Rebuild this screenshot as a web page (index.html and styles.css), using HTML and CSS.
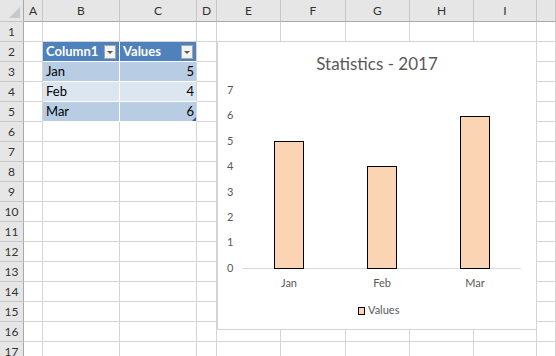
FILE: index.html
```html
<!DOCTYPE html>
<html lang="en">
<head>
    <meta charset="UTF-8">
    <title>Statistics - 2017</title>
    <link rel="stylesheet" href="styles.css">
</head>
<body>
    <div class="sheet">
        <table class="grid">
            <colgroup>
                <col class="c-row">
                <col style="width:19px">
                <col style="width:77px">
                <col style="width:77px">
                <col style="width:20px">
                <col style="width:64px">
                <col style="width:65px">
                <col style="width:64px">
                <col style="width:64px">
                <col style="width:63px">
                <col style="width:19px">
            </colgroup>
            <tr class="head">
                <th class="corner"><span class="tri"></span></th>
                <th>A</th><th>B</th><th>C</th><th>D</th><th>E</th><th>F</th><th>G</th><th>H</th><th>I</th><th></th>
            </tr>
            <tr><th>1</th><td></td><td></td><td></td><td></td><td></td><td></td><td></td><td></td><td></td><td></td></tr>
            <tr><th>2</th><td></td>
                <td class="t-head"><span class="hcell">Column1<span class="drop"></span></span></td>
                <td class="t-head t-last"><span class="hcell">Values<span class="drop"></span></span></td>
                <td></td><td></td><td></td><td></td><td></td><td></td><td></td></tr>
            <tr><th>3</th><td></td><td class="t-dark">Jan</td><td class="t-dark t-last num">5</td><td></td><td></td><td></td><td></td><td></td><td></td><td></td></tr>
            <tr><th>4</th><td></td><td class="t-light">Feb</td><td class="t-light t-last num">4</td><td></td><td></td><td></td><td></td><td></td><td></td><td></td></tr>
            <tr><th>5</th><td></td><td class="t-dark">Mar</td><td class="t-dark t-last num handle">6</td><td></td><td></td><td></td><td></td><td></td><td></td><td></td></tr>
            <tr><th>6</th><td></td><td></td><td></td><td></td><td></td><td></td><td></td><td></td><td></td><td></td></tr>
            <tr><th>7</th><td></td><td></td><td></td><td></td><td></td><td></td><td></td><td></td><td></td><td></td></tr>
            <tr><th>8</th><td></td><td></td><td></td><td></td><td></td><td></td><td></td><td></td><td></td><td></td></tr>
            <tr><th>9</th><td></td><td></td><td></td><td></td><td></td><td></td><td></td><td></td><td></td><td></td></tr>
            <tr><th>10</th><td></td><td></td><td></td><td></td><td></td><td></td><td></td><td></td><td></td><td></td></tr>
            <tr><th>11</th><td></td><td></td><td></td><td></td><td></td><td></td><td></td><td></td><td></td><td></td></tr>
            <tr><th>12</th><td></td><td></td><td></td><td></td><td></td><td></td><td></td><td></td><td></td><td></td></tr>
            <tr><th>13</th><td></td><td></td><td></td><td></td><td></td><td></td><td></td><td></td><td></td><td></td></tr>
            <tr><th>14</th><td></td><td></td><td></td><td></td><td></td><td></td><td></td><td></td><td></td><td></td></tr>
            <tr><th>15</th><td></td><td></td><td></td><td></td><td></td><td></td><td></td><td></td><td></td><td></td></tr>
            <tr><th>16</th><td></td><td></td><td></td><td></td><td></td><td></td><td></td><td></td><td></td><td></td></tr>
            <tr><th>17</th><td></td><td></td><td></td><td></td><td></td><td></td><td></td><td></td><td></td><td></td></tr>
        </table>

        <div class="chart">
            <svg width="318" height="287" viewBox="0 0 318 287">
                <text class="title" x="159" y="28" text-anchor="middle">Statistics - 2017</text>

                <g class="axis-label">
                    <text x="9" y="52">7</text>
                    <text x="9" y="77.4">6</text>
                    <text x="9" y="102.8">5</text>
                    <text x="9" y="128.2">4</text>
                    <text x="9" y="153.6">3</text>
                    <text x="9" y="179">2</text>
                    <text x="9" y="204.4">1</text>
                    <text x="9" y="229.8">0</text>
                </g>

                <line x1="24" y1="226.5" x2="303" y2="226.5" stroke="#d9d9d9" stroke-width="1"/>

                <g class="bar">
                    <rect x="56.5" y="99.5" width="29" height="127"/>
                    <rect x="149.5" y="124.5" width="29" height="102"/>
                    <rect x="242.5" y="74.5" width="29" height="152"/>
                </g>

                <g class="axis-label" text-anchor="middle">
                    <text x="71" y="245">Jan</text>
                    <text x="164" y="245">Feb</text>
                    <text x="257" y="245">Mar</text>
                </g>

                <rect class="bar" x="140.5" y="265.5" width="6" height="7"/>
                <text class="axis-label" x="150" y="272">Values</text>
            </svg>
        </div>
    </div>
</body>
</html>
```

FILE: styles.css
```css
body {
    margin: 0;
    background-color: #ffffff;
    font-family: Lato, "Liberation Sans", sans-serif;
    overflow: hidden;
}

.sheet {
    position: relative;
    width: 556px;
    height: 356px;
    overflow: hidden;
}

.grid {
    table-layout: fixed;
    border-collapse: separate;
    border-spacing: 0;
    width: 556px;
}

.c-row {
    width: 24px;
}

.grid tr {
    height: 20px;
}

.grid tr.head {
    height: 22px;
}

.grid td,
.grid th {
    box-sizing: border-box;
    padding: 0 3px;
    border-right: 1px solid #d4d4d4;
    border-bottom: 1px solid #d4d4d4;
    font-size: 13px;
    line-height: 19px;
    color: #000;
    white-space: nowrap;
    overflow: hidden;
    vertical-align: bottom;
}

.grid th {
    background-color: #e6e6e6;
    font-weight: normal;
    font-size: 12px;
    color: #333;
    text-align: center;
    padding: 0;
}

.grid tr.head th {
    border-bottom: 1px solid #a8a8a8;
    border-right: 1px solid #c6c6c6;
    vertical-align: middle;
}

.grid tr th:first-child {
    border-right: 1px solid #a8a8a8;
    border-bottom: 1px solid #c6c6c6;
}

.corner {
    text-align: right !important;
    vertical-align: bottom !important;
}

.tri {
    display: inline-block;
    width: 0;
    height: 0;
    margin: 0 3px 3px 0;
    border-left: 11px solid transparent;
    border-bottom: 11px solid #c8c8c8;
    vertical-align: bottom;
}

/* table range B2:C5 */
.t-head {
    background-color: #4f81bd;
    color: #fff !important;
    font-weight: bold;
    border-right-color: #fff !important;
    border-bottom-color: #fff !important;
}

.t-dark {
    background-color: #b8cce4;
    border-right-color: #fff !important;
    border-bottom-color: #fff !important;
}

.t-light {
    background-color: #dce6f1;
    border-right-color: #fff !important;
    border-bottom-color: #fff !important;
}

.t-last {
    border-right-color: #d4d4d4 !important;
}

.num {
    text-align: right;
    padding-right: 2px !important;
}

.hcell {
    display: flex;
    align-items: center;
    justify-content: space-between;
    height: 19px;
}

.drop {
    position: relative;
    box-sizing: border-box;
    width: 12px;
    height: 14px;
    background-color: #f3f3f3;
    border: 1px solid #a6a6a6;
}

.drop::after {
    content: "";
    position: absolute;
    left: 2px;
    top: 5px;
    border-left: 3px solid transparent;
    border-right: 3px solid transparent;
    border-top: 3px solid #595959;
}

.handle {
    position: relative;
}

.handle::after {
    content: "";
    position: absolute;
    right: 0;
    bottom: 0;
    border-left: 4px solid transparent;
    border-bottom: 4px solid #3b5ba8;
}

/* chart object floating over the cells */
.chart {
    position: absolute;
    left: 217px;
    top: 41px;
    width: 320px;
    height: 289px;
    box-sizing: border-box;
    border: 1px solid #d4d4d4;
    background-color: #fff;
}

.chart svg {
    display: block;
}

.title {
    font-family: Lato, "Liberation Sans", sans-serif;
    font-size: 17px;
    fill: #595959;
}

.axis-label {
    font-family: Lato, "Liberation Sans", sans-serif;
    font-size: 11px;
    fill: #595959;
}

.bar,
.bar rect {
    fill: #fbd4b4;
    stroke: #000;
    stroke-width: 1;
}
```
